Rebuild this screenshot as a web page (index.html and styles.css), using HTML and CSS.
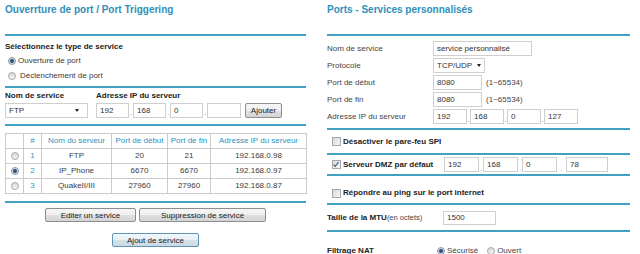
FILE: index.html
```html
<!DOCTYPE html>
<html lang="fr">
<head>
    <meta charset="UTF-8">
    <title>Ports - Services personnalisés</title>
    <link rel="stylesheet" href="styles.css">
</head>
<body>
    <div class="page">
        <!-- Port triggering -->
        <section class="panel panel-left">
            <h1 class="title">Ouverrture de port / Port Triggering</h1>
            <div class="rule"></div>

            <div class="type-block">
                <div class="label-bold head">Sélectionnez le type de service</div>
                <div class="radio-row"><span class="radio checked"></span>Ouverture de port</div>
                <div class="radio-row"><span class="radio"></span><span class="far">Déclenchement de port</span></div>
            </div>
            <div class="rule"></div>

            <div class="add-block">
                <div class="field-col name-col">
                    <div class="label-bold">Nom de service</div>
                    <div class="field-line">
                        <div class="select select-name">FTP<span class="arrow"></span></div>
                    </div>
                </div>
                <div class="field-col">
                    <div class="label-bold">Adresse IP du serveur</div>
                    <div class="field-line">
                        <input class="input ip-left" type="text" value="192"><span class="dot">.</span>
                        <input class="input ip-left" type="text" value="168"><span class="dot">.</span>
                        <input class="input ip-left" type="text" value="0"><span class="dot">.</span>
                        <input class="input ip-left last" type="text" value="">
                        <button class="btn btn-small">Ajouter</button>
                    </div>
                </div>
            </div>
            <div class="rule"></div>

            <table class="services">
                <colgroup>
                    <col style="width:18px">
                    <col style="width:18px">
                    <col style="width:70px">
                    <col style="width:56px">
                    <col style="width:43px">
                    <col style="width:96px">
                </colgroup>
                <tr>
                    <th></th>
                    <th>#</th>
                    <th>Nom du serveur</th>
                    <th>Port de début</th>
                    <th>Port de fin</th>
                    <th>Adresse IP du serveur</th>
                </tr>
                <tr>
                    <td><span class="radio"></span></td>
                    <td class="num">1</td>
                    <td>FTP</td>
                    <td>20</td>
                    <td>21</td>
                    <td>192.168.0.98</td>
                </tr>
                <tr>
                    <td><span class="radio checked"></span></td>
                    <td class="num">2</td>
                    <td>IP_Phone</td>
                    <td>6670</td>
                    <td>6670</td>
                    <td>192.168.0.97</td>
                </tr>
                <tr>
                    <td><span class="radio"></span></td>
                    <td class="num">3</td>
                    <td>QuakeII/III</td>
                    <td>27960</td>
                    <td>27960</td>
                    <td>192.168.0.87</td>
                </tr>
            </table>
            <div class="rule rule-after-table"></div>

            <div class="btn-row">
                <button class="btn btn-edit">Editer un service</button>
                <button class="btn btn-delete">Suppression de service</button>
            </div>
            <div class="btn-row btn-row-last">
                <button class="btn btn-focus">Ajout de service</button>
            </div>
        </section>

        <!-- Custom services -->
        <section class="panel panel-right">
            <h1 class="title">Ports - Services personnalisés</h1>
            <div class="rule"></div>

            <div class="form-block">
                <div class="form-row">
                    <span class="form-label">Nom de service</span>
                    <input class="input input-name" type="text" value="service personnalisé">
                </div>
                <div class="form-row">
                    <span class="form-label">Protocole</span>
                    <div class="select select-proto">TCP/UDP<span class="arrow"></span></div>
                </div>
                <div class="form-row">
                    <span class="form-label">Port de début</span>
                    <input class="input input-port" type="text" value="8080">
                    <span class="hint">(1~65534)</span>
                </div>
                <div class="form-row">
                    <span class="form-label">Port de fin</span>
                    <input class="input input-port" type="text" value="8080">
                    <span class="hint">(1~65534)</span>
                </div>
                <div class="form-row">
                    <span class="form-label">Adresse IP du serveur</span>
                    <input class="input ip-right" type="text" value="192"><span class="dot">.</span>
                    <input class="input ip-right" type="text" value="168"><span class="dot">.</span>
                    <input class="input ip-right" type="text" value="0"><span class="dot">.</span>
                    <input class="input ip-right" type="text" value="127">
                </div>
            </div>
            <div class="rule"></div>

            <div class="check-row spi-row">
                <span class="checkbox"></span>
                <span class="label-bold">Désactiver le pare-feu SPI</span>
            </div>
            <div class="rule"></div>

            <div class="check-row dmz-row">
                <span class="dmz-label">
                    <span class="checkbox checked">
                        <svg width="9" height="9" viewBox="0 0 9 9"><path d="M1.8 4.6 L3.6 6.6 L7.3 1.8" fill="none" stroke="#3b5f86" stroke-width="1.3"/></svg>
                    </span>
                    <span class="label-bold">Serveur DMZ par défaut</span>
                </span>
                <input class="input ip-dmz" type="text" value="192"><span class="dot">.</span>
                <input class="input ip-dmz" type="text" value="168"><span class="dot">.</span>
                <input class="input ip-dmz" type="text" value="0"><span class="dot dot-wide">.</span>
                <input class="input ip-dmz wide" type="text" value="78">
            </div>
            <div class="rule"></div>

            <div class="check-row ping-row">
                <span class="checkbox"></span>
                <span class="label-bold">Répondre au ping sur le port internet</span>
            </div>
            <div class="rule"></div>

            <div class="mtu-row">
                <span class="mtu-label"><span class="label-bold">Taille de la MTU</span><span class="small">(en octets)</span></span>
                <input class="input input-mtu" type="text" value="1500">
            </div>
            <div class="rule"></div>

            <div class="nat-row">
                <span class="nat-label label-bold">Filtrage NAT</span>
                <span class="radio checked"></span><span class="nat-option">Sécurisé</span>
                <span class="radio"></span><span class="nat-option">Ouvert</span>
            </div>
        </section>
    </div>
</body>
</html>
```

FILE: styles.css
```css
html, body {
    overflow: hidden;
}

body {
    margin: 0;
    font-family: 'Liberation Sans', Arial, sans-serif;
    font-size: 8px;
    color: #3a3a3a;
    background-color: #fff;
}

.page {
    display: flex;
    gap: 21px;
    padding-left: 5px;
}

.panel-left {
    width: 301px;
}

.panel-right {
    width: 303px;
}

.title {
    margin: 0;
    height: 34px;
    line-height: 20px;
    font-size: 10px;
    font-weight: bold;
    color: #2f8fba;
}

.rule {
    height: 2px;
    background-color: #42a0c2;
}

.label-bold {
    font-weight: bold;
    color: #222;
}

/* Service type */
.type-block {
    padding: 4px 0 3px;
}

.type-block .head {
    line-height: 13px;
}

.radio-row {
    display: flex;
    align-items: center;
    height: 15px;
    padding-left: 3px;
}

.radio-row .radio {
    margin-right: 2px;
}

.radio-row .far {
    margin-left: 2px;
}

.radio {
    display: inline-block;
    box-sizing: border-box;
    width: 8px;
    height: 8px;
    border: 1px solid #a9a9a9;
    border-radius: 50%;
    background: linear-gradient(#d6d6d6, #f6f6f6);
    vertical-align: middle;
}

.radio.checked {
    border-color: #8b98a6;
    background: radial-gradient(circle, #2b4a6e 0, #3c5f86 1.6px, #c9d6e2 2.4px, #eef2f6 4px);
}

/* Add row */
.add-block {
    display: flex;
    padding: 2px 0 6px;
}

.field-col .label-bold {
    line-height: 12px;
}

.name-col {
    width: 91px;
}

.field-line {
    display: flex;
    align-items: center;
    height: 16px;
}

.input {
    box-sizing: border-box;
    height: 15px;
    margin: 0;
    padding: 0 0 0 3px;
    border: 1px solid #cfcfcf;
    background-color: #fff;
    font-family: 'Liberation Sans', Arial, sans-serif;
    font-size: 8px;
    color: #333;
    outline: none;
}

.ip-left {
    width: 33px;
}

.ip-left.last {
    width: 34px;
}

.dot {
    display: inline-block;
    width: 4px;
    align-self: flex-end;
    line-height: 10px;
    text-align: center;
    color: #888;
}

.select {
    box-sizing: border-box;
    display: flex;
    align-items: center;
    justify-content: space-between;
    height: 15px;
    padding: 0 3px;
    border: 1px solid #cfcfcf;
    color: #333;
}

.select-name {
    width: 83px;
    padding-right: 8px;
}

.select-proto {
    width: 52px;
    padding-right: 3px;
}

.arrow {
    width: 0;
    height: 0;
    border-left: 2.5px solid transparent;
    border-right: 2.5px solid transparent;
    border-top: 3px solid #222;
}

.btn {
    box-sizing: border-box;
    height: 14px;
    margin: 0;
    padding: 0;
    border: 1px solid #8d8d8d;
    border-radius: 2px;
    background: linear-gradient(#f6f6f6 0, #eeeeee 50%, #e0e0e0 51%, #d4d4d4 100%);
    font-family: 'Liberation Sans', Arial, sans-serif;
    font-size: 8px;
    color: #222;
}

.btn-small {
    width: 37px;
    height: 15px;
    margin-left: 4px;
}

/* Table */
.services {
    width: 301px;
    margin-top: 7px;
    border-collapse: collapse;
    table-layout: fixed;
}

.services th,
.services td {
    height: 14px;
    padding: 0;
    border: 1px solid #cbcbcb;
    text-align: center;
    line-height: 14px;
    white-space: nowrap;
    overflow: hidden;
}

.services th {
    font-weight: normal;
    color: #2a93bd;
}

.services td.num {
    color: #2f97bf;
}

.rule-after-table {
    margin-top: 7px;
}

.btn-row {
    display: flex;
    justify-content: center;
    gap: 3px;
    margin-top: 5px;
}

.btn-row-last {
    margin-top: 11px;
}

.btn-edit {
    width: 91px;
}

.btn-delete {
    width: 127px;
}

.btn-focus {
    width: 87px;
    border-color: #5f93b8;
    background: linear-gradient(#f2f8fc 0, #e6eff5 50%, #d6e2ea 51%, #cbd9e2 100%);
}

/* Right form */
.form-block {
    padding: 4px 0 3px;
}

.form-row {
    display: flex;
    align-items: center;
    height: 17px;
}

.form-label {
    width: 106px;
    color: #444;
}

.input-name {
    width: 99px;
}

.input-port {
    width: 49px;
}

.hint {
    margin-left: 4px;
    color: #444;
}

.ip-right {
    width: 34px;
}

.form-row .dot {
    width: 3px;
}

.check-row {
    display: flex;
    align-items: center;
}

.checkbox {
    display: inline-flex;
    box-sizing: border-box;
    width: 9px;
    height: 9px;
    margin: 0 2px 0 5px;
    border: 1px solid #a7a7a7;
    background: linear-gradient(135deg, #d9d9d9, #f7f7f7);
}

.checkbox svg {
    margin: -1px 0 0 -1px;
}

.spi-row {
    height: 23px;
}

.dmz-row {
    height: 19px;
}

.dmz-label {
    display: flex;
    align-items: center;
    width: 117px;
}

.ip-dmz {
    width: 35px;
}

.ip-dmz.wide {
    width: 42px;
}

.dot-wide {
    width: 9px;
}

.ping-row {
    padding: 10px 0 3px;
    line-height: 14px;
}

.mtu-row {
    display: flex;
    align-items: center;
    height: 25px;
}

.mtu-label {
    width: 116px;
}

.small {
    font-size: 7.5px;
    color: #444;
}

.input-mtu {
    width: 53px;
    height: 14px;
}

.nat-row {
    display: flex;
    align-items: center;
    padding-top: 13px;
    line-height: 12px;
}

.nat-label {
    width: 110px;
}

.nat-option {
    margin: 0 9px 0 2px;
    color: #444;
}
```
